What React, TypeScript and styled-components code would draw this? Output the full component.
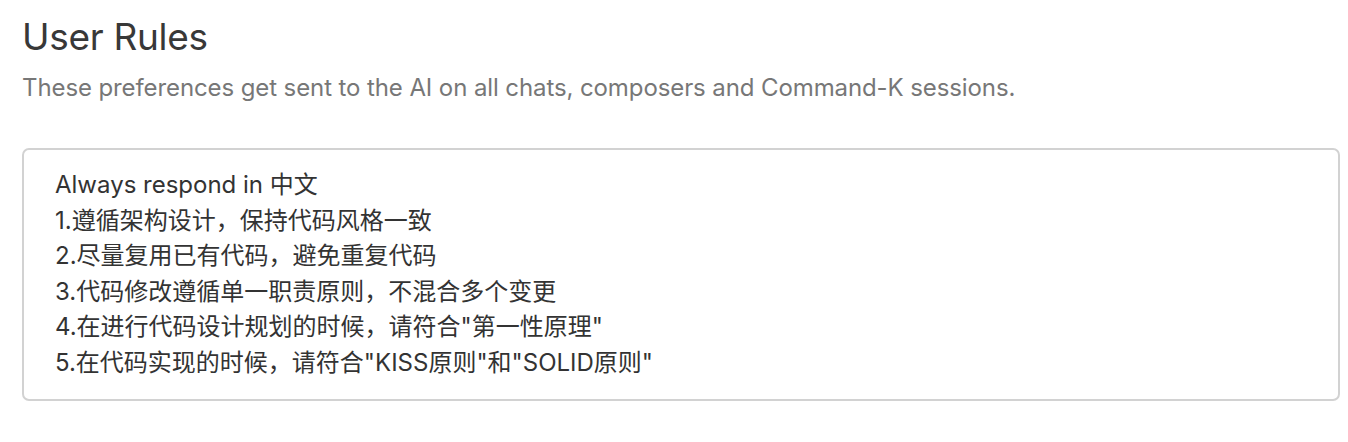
import React from 'react';
import styled, { createGlobalStyle } from 'styled-components';

const rules = [
  'Always respond in 中文',
  '1.遵循架构设计，保持代码风格一致',
  '2.尽量复用已有代码，避免重复代码',
  '3.代码修改遵循单一职责原则，不混合多个变更',
  '4.在进行代码设计规划的时候，请符合"第一性原理"',
  '5.在代码实现的时候，请符合"KISS原则"和"SOLID原则"',
];

const App: React.FC = () => {
  return (
    <>
      <GlobalStyle />
      <Page>
        <Title>User Rules</Title>
        <Subtitle>
          These preferences get sent to the AI on all chats, composers and Command-K sessions.
        </Subtitle>
        <RulesBox>
          {rules.map((line) => (
            <RuleLine key={line}>{line}</RuleLine>
          ))}
        </RulesBox>
      </Page>
    </>
  );
};

const GlobalStyle = createGlobalStyle`
  html, body {
    margin: 0;
    padding: 0;
    background: #ffffff;
  }
  body {
    font-family: Inter, "Noto Sans CJK SC", sans-serif;
  }
`;

const Page = styled.div`
  padding: 14px 8px 0 22px;
  display: flex;
  flex-direction: column;
`;

const Title = styled.h1`
  margin: 0;
  font-size: 37px;
  font-weight: 400;
  line-height: 46px;
  color: #383838;
  letter-spacing: -0.3px;
`;

const Subtitle = styled.p`
  margin: 12px 0 0;
  font-size: 24px;
  line-height: 32px;
  color: #777777;
  letter-spacing: -0.1px;
`;

const RulesBox = styled.div`
  margin-top: 44px;
  width: 1318px;
  height: 253px;
  box-sizing: border-box;
  border: 2px solid #d2d2d2;
  border-radius: 7px;
  padding: 17px 31px;
  display: flex;
  flex-direction: column;
`;

const RuleLine = styled.div`
  font-size: 24px;
  line-height: 35.5px;
  color: #333333;
`;

export default App;
